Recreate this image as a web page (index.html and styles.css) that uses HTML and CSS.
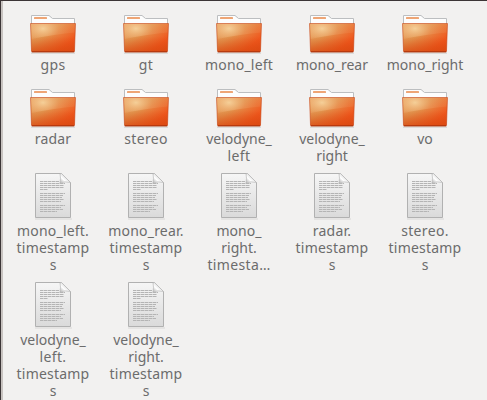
FILE: index.html
```
<!DOCTYPE html>
<html lang="en">
<head>
<meta charset="utf-8">
<title>Files</title>
<link rel="stylesheet" href="styles.css">
</head>
<body>
<svg class="defs" width="0" height="0" aria-hidden="true">
  <defs>
    <linearGradient id="front" x1="0" y1="0" x2="1" y2=".8">
      <stop offset="0" stop-color="#eaa765"/><stop offset=".4" stop-color="#e2954f"/><stop offset=".85" stop-color="#f0571d"/><stop offset="1" stop-color="#ea5019"/>
    </linearGradient>
    <linearGradient id="shade" x1="0" y1="0" x2="0" y2="1">
      <stop offset=".45" stop-color="#d6480f" stop-opacity="0"/><stop offset="1" stop-color="#d6480f" stop-opacity=".7"/>
    </linearGradient>
    <radialGradient id="glow" gradientUnits="userSpaceOnUse" cx="17" cy="24" r="27" gradientTransform="translate(0 7) scale(1 .65)">
      <stop offset="0" stop-color="#f8d9a4" stop-opacity=".85"/><stop offset=".6" stop-color="#f3b983" stop-opacity=".25"/><stop offset="1" stop-color="#f3a873" stop-opacity=".15"/>
    </radialGradient>
    <linearGradient id="paper" x1="0" y1="0" x2="0" y2="1">
      <stop offset="0" stop-color="#f6f6f6"/><stop offset="1" stop-color="#dadada"/>
    </linearGradient>
    <linearGradient id="fold" x1="0" y1="1" x2="1" y2="0">
      <stop offset="0" stop-color="#aaa"/><stop offset=".35" stop-color="#fff"/><stop offset=".65" stop-color="#dcdcdc"/>
    </linearGradient>
    <symbol id="folder" viewBox="0 0 52 51">
      <path d="M5 46.5h44v1H5z" fill="#000" opacity=".18"/>
      <path d="M5.500 20V9.500H23l3.500 3H48.500V20z" fill="#fdfdfd" stroke="#bcbec0"/>
      <rect x="8" y="11" width="13" height="2" rx=".6" fill="#eea575"/>
      <path d="M4.500 17.500h45L48.500 45q0 1-1 1H6.500q-1 0-1-1z" fill="url(#front)"/>
      <path d="M4.500 17.500h45L48.500 45q0 1-1 1H6.500q-1 0-1-1z" fill="url(#shade)"/>
      <path d="M5 18h44l-.3 8.500Q30 28 5.300 33z" fill="url(#glow)"/>
      <path d="M4.500 17.500h45L48.500 45q0 1-1 1H6.500q-1 0-1-1z" fill="none" stroke="#c84a1c" stroke-opacity=".6"/>
      <path d="M6 45.700h42" stroke="#b0350d"/>
    </symbol>
    <symbol id="doc" viewBox="0 0 52 51">
      <path d="M9 46.500h37v1H9z" fill="#000" opacity=".1"/>
      <path d="M9.500 1.500h26L44.500 10.500V45.500h-35z" fill="url(#paper)" stroke="#b1b1b1"/>
      <g stroke="#b4b4b4" stroke-dasharray="3.500 .5">
        <path d="M14 9.500h19M14 11.500h25M14 13.500h24M14 15.500h24M14 17.500h8M14 21.500h25M14 23.500h23M14 25.500h22M14 27.500h24M14 29.500h21M14 33.500h25M14 35.500h21M14 37.500h23M14 39.500h17" />
      </g>
      <path d="M34 2l1.500-.5 9 9q-5-1.500-10.500.5 1-5 0-9z" fill="url(#fold)" stroke="#b9b9b9" stroke-width=".7"/>
    </symbol>
  </defs>
</svg>
<main class="files">
  <div class="item"><svg class="icon"><use href="#folder"/></svg><div class="name"><span class="wide">gps</span></div></div>
  <div class="item"><svg class="icon"><use href="#folder"/></svg><div class="name"><span class="wide">gt</span></div></div>
  <div class="item"><svg class="icon"><use href="#folder"/></svg><div class="name"><span class="mid">mono_left</span></div></div>
  <div class="item"><svg class="icon"><use href="#folder"/></svg><div class="name"><span>mono_rear</span></div></div>
  <div class="item"><svg class="icon"><use href="#folder"/></svg><div class="name"><span>mono_right</span></div></div>

  <div class="item"><svg class="icon"><use href="#folder"/></svg><div class="name"><span class="mid">radar</span></div></div>
  <div class="item"><svg class="icon"><use href="#folder"/></svg><div class="name"><span class="wide">stereo</span></div></div>
  <div class="item"><svg class="icon"><use href="#folder"/></svg><div class="name"><span>velodyne_</span><span class="wide">left</span></div></div>
  <div class="item"><svg class="icon"><use href="#folder"/></svg><div class="name"><span>velodyne_</span><span>right</span></div></div>
  <div class="item"><svg class="icon"><use href="#folder"/></svg><div class="name"><span>vo</span></div></div>

  <div class="item"><svg class="icon"><use href="#doc"/></svg><div class="name"><span class="mid">mono_left.</span><span class="mid">timestamp</span><span>s</span></div></div>
  <div class="item"><svg class="icon"><use href="#doc"/></svg><div class="name"><span class="mid">mono_rear.</span><span class="mid">timestamp</span><span>s</span></div></div>
  <div class="item"><svg class="icon"><use href="#doc"/></svg><div class="name"><span>mono_</span><span>right.</span><span class="wide">timesta…</span></div></div>
  <div class="item"><svg class="icon"><use href="#doc"/></svg><div class="name"><span class="mid">radar.</span><span class="mid">timestamp</span><span>s</span></div></div>
  <div class="item"><svg class="icon"><use href="#doc"/></svg><div class="name"><span class="wide">stereo.</span><span class="mid">timestamp</span><span>s</span></div></div>

  <div class="item"><svg class="icon"><use href="#doc"/></svg><div class="name"><span>velodyne_</span><span class="wide">left.</span><span class="mid">timestamp</span><span>s</span></div></div>
  <div class="item"><svg class="icon"><use href="#doc"/></svg><div class="name"><span>velodyne_</span><span>right.</span><span class="mid">timestamp</span><span>s</span></div></div>
</main>
</body>
</html>
```
FILE: styles.css
```
* { box-sizing: border-box; }
body { margin: 0; background: #f2f1f0; overflow: hidden; }
.defs { display: block; }
.files {
  height: 400px;
  display: grid;
  grid-template-columns: repeat(5, 93px);
  grid-template-rows: 74px 92px 109px 119px;
  padding: 5px 0 0 5px;
  border-top: 1px solid #3c3536;
  border-left: 1px solid #3c3536;
  box-shadow: inset 2px 0 #c8c3c0;
  overflow: hidden;
}
.item { display: flex; flex-direction: column; align-items: center; }
.icon { width: 52px; height: 51px; flex: none; margin-right: 1px; }
.name {
  display: flex;
  flex-direction: column;
  align-items: center;
  margin-top: -1px;
  padding-left: 1px;
  color: #6c6c6c;
  font: 14px/17px "Noto Sans", sans-serif;
  white-space: nowrap;
}
.mid { letter-spacing: .2px; }
.wide { letter-spacing: .35px; }
```
